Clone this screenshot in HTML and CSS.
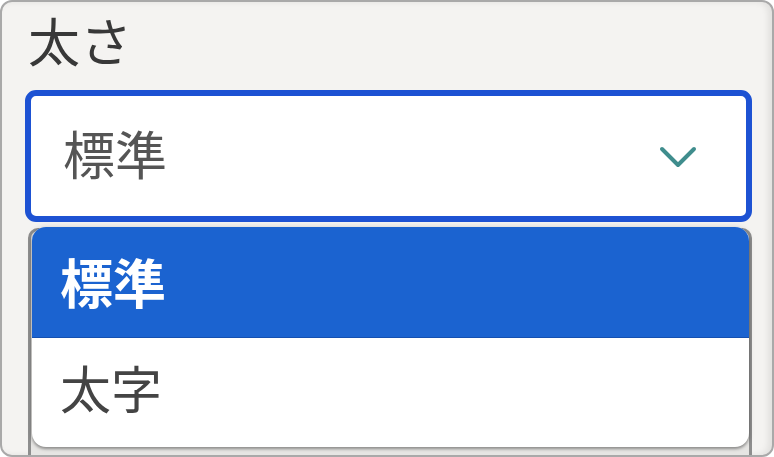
FILE: index.html
```html
<!DOCTYPE html>
<html lang="ja">
<head>
<meta charset="utf-8">
<link rel="stylesheet" href="styles.css">
</head>
<body>
<div class="frame">
  <div class="label">太さ</div>
  <div class="field">
    <div class="select">
      <span class="value">標準</span>
      <svg class="chevron" width="40" height="26" viewBox="0 0 40 26">
        <path d="M3 4 L19 20 L35 4" fill="none" stroke="#3f8d8d" stroke-width="4" stroke-linecap="round" stroke-linejoin="round"/>
      </svg>
    </div>
    <div class="under"></div>
    <ul class="menu">
      <li class="opt selected">標準</li>
      <li class="opt">太字</li>
    </ul>
  </div>
</div>
</body>
</html>
```
FILE: styles.css
```css
html, body {
  margin: 0;
  padding: 0;
  background: #ffffff;
}
.frame {
  box-sizing: border-box;
  width: 774px;
  height: 457px;
  border: 2px solid #a9a9a9;
  border-radius: 12px;
  background: #f4f3f1;
  overflow: hidden;
  padding: 8px 20px 0 23px;
  font-family: "Noto Sans CJK JP", "Noto Sans", sans-serif;
  box-shadow: inset -4px 0 6px rgba(0,0,0,0.08);
}
.label {
  font-size: 52px;
  line-height: 60px;
  color: #383838;
  padding-left: 3px;
  margin-bottom: 20px;
}
.field {
  position: relative;
}
.select {
  box-sizing: border-box;
  height: 132px;
  width: 727px;
  border: 6px solid #1d52d3;
  border-radius: 11px;
  background: #ffffff;
  display: flex;
  align-items: center;
  justify-content: space-between;
  padding: 0 47px 0 32px;
}
.value {
  font-size: 52px;
  color: #555555;
  line-height: 1;
  margin-top: -6px;
}
.chevron {
  display: block;
  margin-top: 4px;
}
.under {
  box-sizing: border-box;
  margin: 6px 0 0 3px;
  width: 724px;
  height: 260px;
  border: 3px solid #8e8e8e;
  border-radius: 10px;
  background: #e6e5e3;
}
.menu {
  position: absolute;
  left: 7px;
  top: 137px;
  width: 717px;
  margin: 0;
  padding: 0;
  list-style: none;
  background: #ffffff;
  border-radius: 14px;
  overflow: hidden;
  box-shadow: 0 2px 3px rgba(0,0,0,0.35), 0 0 6px rgba(0,0,0,0.12);
}
.opt {
  height: 109px;
  box-sizing: border-box;
  display: flex;
  align-items: center;
  padding: 0 0 10px 28px;
  font-size: 51px;
  color: #444444;
  line-height: 1;
}
.opt.selected {
  background: #1b63d0;
  color: #ffffff;
  font-weight: 700;
  font-size: 53px;
  height: 111px;
  padding-bottom: 2px;
  border-bottom: 1px solid #1550b0;
}
```
